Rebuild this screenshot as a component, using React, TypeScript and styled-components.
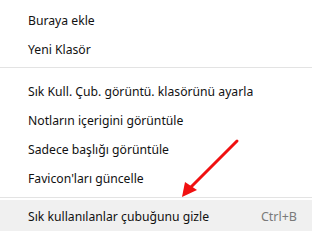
import styled, { createGlobalStyle } from "styled-components";

const GlobalStyle = createGlobalStyle`
  html, body {
    margin: 0;
    padding: 0;
    background: #ffffff;
  }
  body {
    font-family: "Noto Sans", "Open Sans", sans-serif;
  }
`;

const items = [
  [{ label: "Buraya ekle" }, { label: "Yeni Klasör" }],
  [
    { label: "Sık Kull. Çub. görüntü. klasörünü ayarla" },
    { label: "Notların içerigini görüntüle" },
    { label: "Sadece başlığı görüntüle" },
    { label: "Favicon'ları güncelle" },
  ],
];

export default function App() {
  return (
    <>
      <GlobalStyle />
      <Menu>
        {items.map((group, i) => (
          <Group key={i}>
            {group.map((item) => (
              <Item key={item.label}>
                <Label>{item.label}</Label>
              </Item>
            ))}
            <Separator />
          </Group>
        ))}
        <Item $active $tall>
          <Label>Sık kullanılanlar çubuğunu gizle</Label>
          <Shortcut>Ctrl+B</Shortcut>
        </Item>
        <Arrow width="70" height="70" viewBox="0 0 70 70">
          <line x1="62" y1="6" x2="14" y2="54" stroke="#f01010" strokeWidth="3" strokeLinecap="round" />
          <polygon points="7,62 10,47 22,55" fill="#f01010" />
        </Arrow>
      </Menu>
    </>
  );
}

const Menu = styled.div`
  position: relative;
  width: 312px;
  height: 231px;
  overflow: hidden;
  padding-top: 5px;
  box-sizing: border-box;
  background: #ffffff;
`;

const Group = styled.div`
  display: flex;
  flex-direction: column;
  &:first-child > hr {
    margin: 4px 0 8px;
  }
  &:nth-child(2) > hr {
    margin: 5px 0 2px;
  }
`;

const Item = styled.div<{ $active?: boolean; $tall?: boolean }>`
  display: flex;
  align-items: center;
  justify-content: space-between;
  height: ${(p) => (p.$tall ? "32px" : "29px")};
  padding: 1px 15px 0 28px;
  box-sizing: border-box;
  background: ${(p) => (p.$active ? "#f0f0f0" : "transparent")};
  font-size: 12.2px;
  color: #111111;
`;

const Label = styled.span`
  white-space: nowrap;
`;

const Shortcut = styled.span`
  color: #7a7a7a;
  font-size: 12.5px;
`;

const Separator = styled.hr`
  border: none;
  height: 1px;
  width: 100%;
  background: #e3e3e3;
`;

const Arrow = styled.svg`
  position: absolute;
  left: 175px;
  top: 135px;
`;
